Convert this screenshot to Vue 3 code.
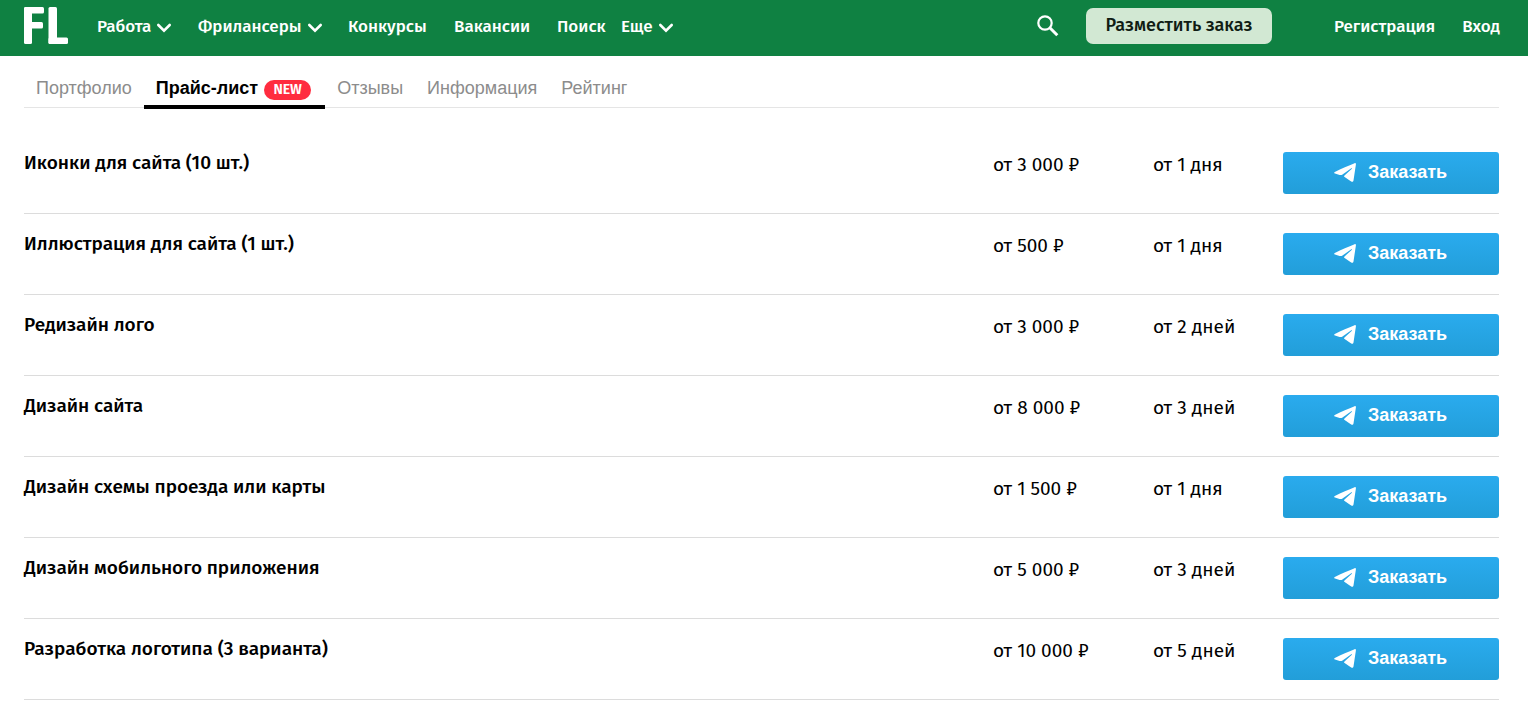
<script setup>
const mainLinks = [
  { label: 'Работа', menu: true },
  { label: 'Фрилансеры', menu: true },
  { label: 'Конкурсы' },
  { label: 'Вакансии' },
  { label: 'Поиск' },
  { label: 'Еще', menu: true },
]

const tabs = [
  { label: 'Портфолио' },
  { label: 'Прайс-лист', active: true, badge: 'NEW' },
  { label: 'Отзывы' },
  { label: 'Информация' },
  { label: 'Рейтинг' },
]

const services = [
  { name: 'Иконки для сайта (10 шт.)', price: 'от 3 000 ₽', term: 'от 1 дня' },
  { name: 'Иллюстрация для сайта (1 шт.)', price: 'от 500 ₽', term: 'от 1 дня' },
  { name: 'Редизайн лого', price: 'от 3 000 ₽', term: 'от 2 дней' },
  { name: 'Дизайн сайта', price: 'от 8 000 ₽', term: 'от 3 дней' },
  { name: 'Дизайн схемы проезда или карты', price: 'от 1 500 ₽', term: 'от 1 дня' },
  { name: 'Дизайн мобильного приложения', price: 'от 5 000 ₽', term: 'от 3 дней' },
  { name: 'Разработка логотипа (3 варианта)', price: 'от 10 000 ₽', term: 'от 5 дней' },
]
</script>

<template>
  <div class="page">
    <header class="header">
      <a class="logo" href="#" aria-label="FL">
        <svg width="44" height="37" viewBox="0 0 44 37" fill="#fff" aria-hidden="true">
          <rect x="0" y="0" width="8" height="37" rx="1.5" />
          <rect x="0" y="0" width="20" height="6.5" rx="1.5" />
          <rect x="4" y="15" width="15" height="6.5" rx="1.5" />
          <rect x="24.5" y="0" width="8.5" height="37" rx="1.5" />
          <rect x="24.5" y="30.5" width="19.5" height="6.5" rx="1.5" />
        </svg>
      </a>
      <nav class="main-nav">
        <a v-for="link in mainLinks" :key="link.label" class="nav-link" href="#">
          {{ link.label }}
          <svg v-if="link.menu" class="chevron" width="16" height="10" viewBox="0 0 16 10" aria-hidden="true">
            <path d="M2.3 2 8 7.6 13.7 2" fill="none" stroke="#fff" stroke-width="2.6" stroke-linecap="round" />
          </svg>
        </a>
      </nav>
      <button class="search" type="button" aria-label="Поиск">
        <svg width="22" height="22" viewBox="0 0 22 22" fill="none" stroke="#fff" aria-hidden="true">
          <circle cx="8" cy="8" r="6.7" stroke-width="2.2" />
          <path d="M12.8 12.8 20.3 20.3" stroke-width="3" />
        </svg>
      </button>
      <button class="post" type="button">Разместить заказ</button>
      <div class="account">
        <a class="nav-link" href="#">Регистрация</a>
        <a class="nav-link" href="#">Вход</a>
      </div>
    </header>

    <main class="content">
      <nav class="tabs">
        <a v-for="tab in tabs" :key="tab.label" class="tab" :class="{ active: tab.active }" href="#">
          {{ tab.label }}
          <span v-if="tab.badge" class="badge">{{ tab.badge }}</span>
        </a>
      </nav>

      <table class="prices">
        <tbody>
          <tr v-for="service in services" :key="service.name">
            <th class="name" scope="row">{{ service.name }}</th>
            <td class="price">{{ service.price }}</td>
            <td class="term">{{ service.term }}</td>
            <td class="action">
              <button class="order" type="button">
                <svg width="22" height="19" viewBox="0 0 22 19" fill="#fff" aria-hidden="true">
                  <path d="M20.6 .2C14.5 2.8 7.4 5.7 .8 8.9C-.3 9.5 0 10.1 1 10.5L5.6 11.9C6.8 12.2 7.6 12 8.5 11.4L17.3 5.3C17.8 4.9 18.3 5.3 17.9 5.7L10.5 12.4C9.9 13 9.9 13.6 10.6 14.1L17.2 18.4C18.4 19.1 19.2 18.8 19.5 17.4L21.9 1.5C22 .4 21.4-.1 20.6 .2Z" />
                </svg>
                Заказать
              </button>
            </td>
          </tr>
        </tbody>
      </table>
    </main>
  </div>
</template>

<style>
body {
  margin: 0;
  background: #fff;
}
</style>

<style scoped>
.page {
  font-family: "Fira Sans", "Noto Sans", sans-serif;
  color: #000;
}

.header {
  display: flex;
  align-items: center;
  height: 56px;
  padding: 0 28px 0 24px;
  box-sizing: border-box;
  background: #0f8142;
}

.logo {
  display: flex;
  margin: 0 29px 5px 0;
}

.main-nav {
  display: grid;
  grid-template-columns: 101px 150px 106px 103px 64px 56px;
  margin-bottom: 2px;
}

.nav-link {
  display: flex;
  align-items: center;
  width: max-content;
  gap: 5px;
  color: #fff;
  font-size: 17px;
  font-weight: 500;
  line-height: 24px;
  text-decoration: none;
  white-space: nowrap;
}

.chevron {
  flex: none;
  margin-top: 2px;
}

.search {
  display: flex;
  margin: 0 27px 4px auto;
  padding: 0;
  border: 0;
  background: none;
  cursor: pointer;
}

.post {
  width: 186px;
  height: 36px;
  margin-bottom: 4px;
  padding: 0 0 2px;
  border: 0;
  border-radius: 7px;
  background: #d2e8d3;
  color: #101c14;
  font: inherit;
  font-size: 18px;
  font-weight: 500;
  white-space: nowrap;
  cursor: pointer;
}

.account {
  display: flex;
  justify-content: space-between;
  width: 166px;
  margin: 0 0 2px 62px;
}

.content {
  padding: 0 29px 0 24px;
}

.tabs {
  display: flex;
  box-sizing: border-box;
  height: 52px;
  margin-bottom: 25px;
  border-bottom: 1px solid #e5e5e5;
}

.tab {
  display: flex;
  align-items: center;
  gap: 6px;
  box-sizing: border-box;
  height: 53px;
  padding: 15px 12px 4px;
  color: #8c8c8c;
  font-family: "Liberation Sans", Arial, sans-serif;
  font-size: 18px;
  text-decoration: none;
  white-space: nowrap;
}

.tab.active {
  padding-right: 14px;
  padding-bottom: 0;
  border-bottom: 4px solid #000;
  color: #000;
  font-weight: 700;
}

.badge {
  width: 47px;
  margin-top: 3px;
  border-radius: 10px;
  background: #ff2c3f;
  color: #fff;
  font-family: "Fira Sans", "Noto Sans", sans-serif;
  font-size: 14px;
  font-weight: 600;
  line-height: 20px;
  text-align: center;
}

.prices {
  width: 100%;
  border-collapse: separate;
  border-spacing: 0;
  table-layout: fixed;
}

.prices th,
.prices td {
  box-sizing: border-box;
  height: 81px;
  padding: 19px 0 0;
  border-bottom: 1px solid #dcdcdc;
  font-size: 19px;
  font-weight: 400;
  line-height: 26px;
  text-align: left;
  vertical-align: top;
  white-space: nowrap;
}

.prices .name {
  padding-top: 17px;
  font-weight: 500;
}

.price {
  width: 160px;
}

.term {
  width: 130px;
}

.action {
  width: 216px;
}

.order {
  display: flex;
  align-items: center;
  justify-content: center;
  gap: 12px;
  width: 100%;
  height: 42px;
  padding: 0 1px 1px 0;
  border: 0;
  border-radius: 3px;
  background: linear-gradient(#2aabee, #229ed9);
  color: #fff;
  font-family: "Liberation Sans", Arial, sans-serif;
  font-size: 18px;
  font-weight: 700;
  cursor: pointer;
}
</style>
